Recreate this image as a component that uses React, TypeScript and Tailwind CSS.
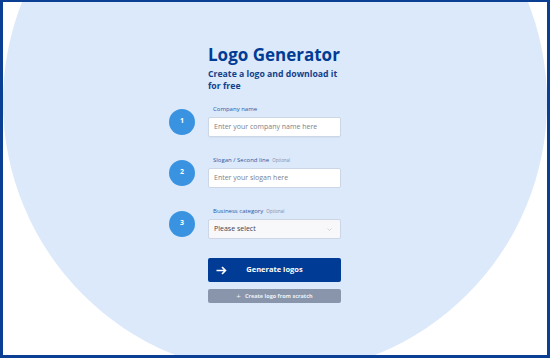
import React from "react";

function NumberDot({ n }: { n: number }) {
  return (
    <div className="flex h-[26px] w-[26px] shrink-0 items-center justify-center rounded-full bg-[#3a93e0] text-[7px] font-bold text-white">
      {n}
    </div>
  );
}

function Label({ text, optional }: { text: string; optional?: boolean }) {
  return (
    <div className="mb-[5px] ml-[5px] flex items-baseline gap-[3px] leading-[6px]">
      <span className="text-[6px] text-[#2c5aa6]">{text}</span>
      {optional && <span className="text-[4.5px] text-[#7d8fae]">Optional</span>}
    </div>
  );
}

export default function App() {
  return (
    <div
      className="relative h-[358px] w-[550px] overflow-hidden border-[3px] border-t-2 border-[#0a3f94] bg-white"
      style={{ fontFamily: '"Open Sans", "Noto Sans", sans-serif' }}
    >
      <div className="absolute left-[0px] top-[-172px] h-[544px] w-[544px] rounded-full bg-[#dbe9fa]" />
      <div className="relative flex flex-col pl-[205px] pt-[42px]">
        <h1 className="text-[17px] font-bold leading-[22px] text-[#003b95]">Logo Generator</h1>
        <p className="mt-[2px] w-[140px] text-[8.7px] font-bold leading-[12px] text-[#143f8a]">
          Create a logo and download it for free
        </p>
      </div>
      <div className="relative ml-[166px] mt-[14px] flex w-[172px] flex-col gap-[20px]">
        <div className="flex items-center gap-[13px]">
          <NumberDot n={1} />
          <div className="flex w-[133px] flex-col">
            <Label text="Company name" />
            <div className="flex h-[20px] items-center rounded-[2px] border border-[#cdd6e4] bg-white px-[5px] text-[7px] text-[#7d828c] shadow-[0_1px_1px_rgba(0,0,0,0.04)]">
              Enter your company name here
            </div>
          </div>
        </div>
        <div className="flex items-center gap-[13px]">
          <NumberDot n={2} />
          <div className="flex w-[133px] flex-col">
            <Label text="Slogan / Second line" optional />
            <div className="flex h-[20px] items-center rounded-[2px] border border-[#cdd6e4] bg-white px-[5px] text-[7px] text-[#7d828c]">
              Enter your slogan here
            </div>
          </div>
        </div>
        <div className="flex items-center gap-[13px]">
          <NumberDot n={3} />
          <div className="flex w-[133px] flex-col">
            <Label text="Business category" optional />
            <div className="flex h-[20px] items-center justify-between rounded-[2px] border border-[#cdd6e4] bg-[#f8f7fa] pl-[5px] pr-[8px] text-[7px] text-[#3d4350]">
              <span>Please select</span>
              <svg width="5" height="3" viewBox="0 0 5 3" fill="none">
                <path d="M0.5 0.5L2.5 2.5L4.5 0.5" stroke="#b8bdc7" strokeWidth="0.6" />
              </svg>
            </div>
          </div>
        </div>
        <div className="-mt-[1px] ml-[39px] flex w-[133px] flex-col gap-[7px]">
          <button className="relative flex h-[24px] items-center justify-center rounded-[2px] bg-[#003b95] text-[7.5px] font-bold text-white">
            <svg className="absolute left-[8px]" width="11" height="9" viewBox="0 0 11 9" fill="none">
              <path d="M0.5 4.5H9.5M6 1L9.5 4.5L6 8" stroke="white" strokeWidth="1.6" />
            </svg>
            Generate logos
          </button>
          <button className="flex h-[14px] items-center justify-center gap-[4px] rounded-[2px] bg-[#8995aa] text-[5.5px] font-bold text-[#eef1f6]">
            <span className="text-[8px] font-normal leading-none">+</span>
            Create logo from scratch
          </button>
        </div>
      </div>
    </div>
  );
}
